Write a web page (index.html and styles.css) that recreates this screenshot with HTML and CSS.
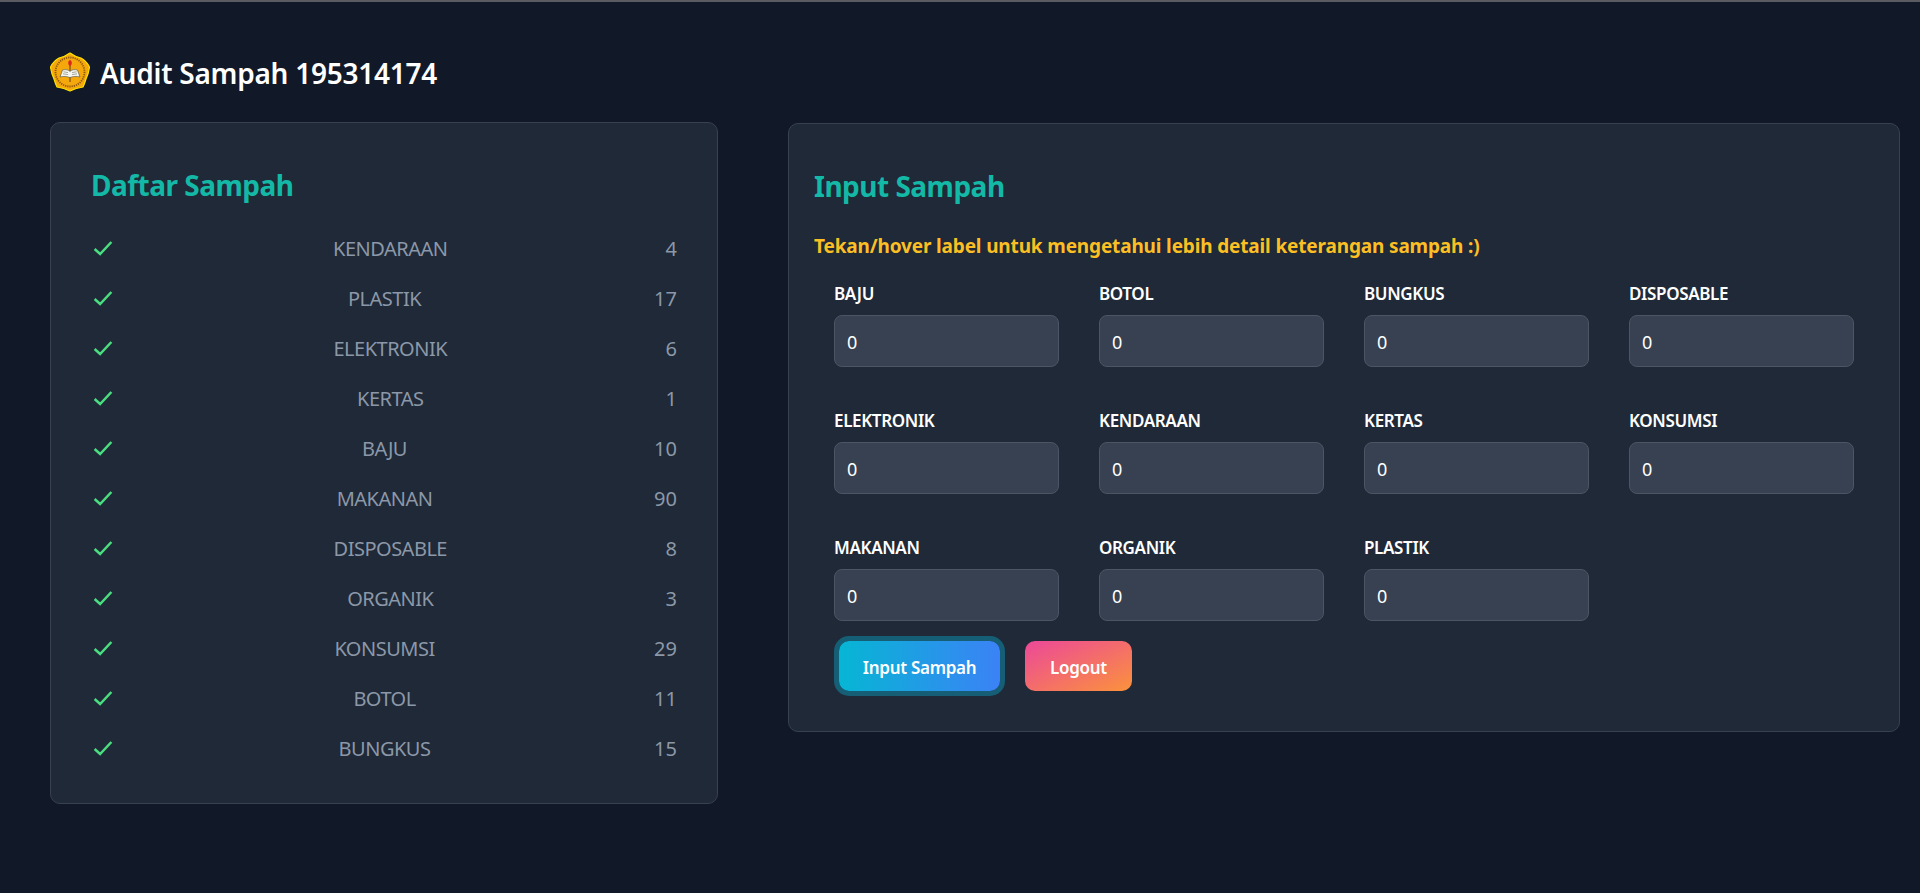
FILE: index.html
```html
<!DOCTYPE html>
<html lang="id">
<head>
<meta charset="utf-8">
<title>Audit Sampah 195314174</title>
<link rel="stylesheet" href="styles.css">
</head>
<body>
<div class="page">
  <header class="brand">
    <svg class="logo" viewBox="0 0 40 40" aria-hidden="true">
      <path d="M20 1 Q25.5 5 31 6 Q36.5 9 39.5 15 Q38.5 22 36 27 Q34.5 32 33 35 Q26 36 20 39 Q14 36 7 35 Q5.5 32 4 27 Q1.5 22 .5 15 Q3.5 9 9 6 Q14.5 5 20 1Z" fill="#f5a80c" stroke="#ffe100" stroke-width="1.2" stroke-linejoin="round"/>
      <circle cx="20" cy="20" r="14.5" fill="none" stroke="#8a5510" stroke-width="1.8" stroke-dasharray="1.2 1"/>
      <path d="M20 8 C17.6 9.2 17.6 12.4 20 14.5 C22.4 12.4 22.4 9.2 20 8Z" fill="#d6281c"/>
      <rect x="19.3" y="14" width="1.4" height="16" fill="#8a5a10"/>
      <path d="M10 25 L12.5 18 C15.5 17.2 18 17.6 20 19.4 C22 17.6 24.5 17.2 27.5 18 L30 25 C26.5 24 23 24.3 20 25.6 C17 24.3 13.5 24 10 25Z" fill="#f4f4f0" stroke="#4a4a3a" stroke-width=".6"/>
      <path d="M13.5 19.8 L18 20.6 M13 21.8 L18 22.6 M26.5 19.8 L22 20.6 M27 21.8 L22 22.6" stroke="#8a8a80" stroke-width=".7"/>
    </svg>
    <h1 class="brand-title">Audit Sampah 195314174</h1>
  </header>
  <main class="columns">
    <section class="card card-list">
      <h2 class="card-title">Daftar Sampah</h2>
      <ul class="list">
        <li class="row"><span class="tick"><svg viewBox="0 0 20 20"><path d="M3 10.8 L7.6 15 L17 5" /></svg></span><span class="name">KENDARAAN</span><span class="num">4</span></li>
        <li class="row"><span class="tick"><svg viewBox="0 0 20 20"><path d="M3 10.8 L7.6 15 L17 5" /></svg></span><span class="name">PLASTIK</span><span class="num">17</span></li>
        <li class="row"><span class="tick"><svg viewBox="0 0 20 20"><path d="M3 10.8 L7.6 15 L17 5" /></svg></span><span class="name">ELEKTRONIK</span><span class="num">6</span></li>
        <li class="row"><span class="tick"><svg viewBox="0 0 20 20"><path d="M3 10.8 L7.6 15 L17 5" /></svg></span><span class="name">KERTAS</span><span class="num">1</span></li>
        <li class="row"><span class="tick"><svg viewBox="0 0 20 20"><path d="M3 10.8 L7.6 15 L17 5" /></svg></span><span class="name">BAJU</span><span class="num">10</span></li>
        <li class="row"><span class="tick"><svg viewBox="0 0 20 20"><path d="M3 10.8 L7.6 15 L17 5" /></svg></span><span class="name">MAKANAN</span><span class="num">90</span></li>
        <li class="row"><span class="tick"><svg viewBox="0 0 20 20"><path d="M3 10.8 L7.6 15 L17 5" /></svg></span><span class="name">DISPOSABLE</span><span class="num">8</span></li>
        <li class="row"><span class="tick"><svg viewBox="0 0 20 20"><path d="M3 10.8 L7.6 15 L17 5" /></svg></span><span class="name">ORGANIK</span><span class="num">3</span></li>
        <li class="row"><span class="tick"><svg viewBox="0 0 20 20"><path d="M3 10.8 L7.6 15 L17 5" /></svg></span><span class="name">KONSUMSI</span><span class="num">29</span></li>
        <li class="row"><span class="tick"><svg viewBox="0 0 20 20"><path d="M3 10.8 L7.6 15 L17 5" /></svg></span><span class="name">BOTOL</span><span class="num">11</span></li>
        <li class="row"><span class="tick"><svg viewBox="0 0 20 20"><path d="M3 10.8 L7.6 15 L17 5" /></svg></span><span class="name">BUNGKUS</span><span class="num">15</span></li>
      </ul>
    </section>
    <section class="card card-form">
      <h2 class="card-title">Input Sampah</h2>
      <p class="note">Tekan/hover label untuk mengetahui lebih detail keterangan sampah :)</p>
      <form class="fields">
        <div class="field"><label class="field-label">BAJU</label><input class="field-input" value="0"></div>
        <div class="field"><label class="field-label">BOTOL</label><input class="field-input" value="0"></div>
        <div class="field"><label class="field-label">BUNGKUS</label><input class="field-input" value="0"></div>
        <div class="field"><label class="field-label">DISPOSABLE</label><input class="field-input" value="0"></div>
        <div class="field"><label class="field-label">ELEKTRONIK</label><input class="field-input" value="0"></div>
        <div class="field"><label class="field-label">KENDARAAN</label><input class="field-input" value="0"></div>
        <div class="field"><label class="field-label">KERTAS</label><input class="field-input" value="0"></div>
        <div class="field"><label class="field-label">KONSUMSI</label><input class="field-input" value="0"></div>
        <div class="field"><label class="field-label">MAKANAN</label><input class="field-input" value="0"></div>
        <div class="field"><label class="field-label">ORGANIK</label><input class="field-input" value="0"></div>
        <div class="field"><label class="field-label">PLASTIK</label><input class="field-input" value="0"></div>
      </form>
      <div class="actions">
        <button class="btn btn-primary" type="button">Input Sampah</button>
        <button class="btn btn-logout" type="button">Logout</button>
      </div>
    </section>
  </main>
</div>
</body>
</html>
```
FILE: styles.css
```css
* { box-sizing: border-box; }
html, body { margin: 0; height: 100%; }
body {
  background: #111827;
  color: #fff;
  font-family: "Noto Sans", "Open Sans", sans-serif;
  overflow: hidden;
}
.page {
  border-top: 2px solid #5a5c61;
  padding: 50px 20px 0 50px;
  height: 100%;
}
.brand {
  display: flex;
  align-items: center;
  gap: 10px;
  height: 40px;
  margin-bottom: 30px;
}
.logo { width: 40px; height: 40px; flex: none; }
.brand-title {
  margin: 0;
  padding-top: 2px;
  font-size: 28px;
  font-weight: 600;
  line-height: 40px;
  letter-spacing: -0.25px;
}
.columns {
  display: grid;
  grid-template-columns: 668px 1112px;
  column-gap: 70px;
  align-items: start;
}
.card {
  background: #1f2937;
  border: 1px solid #374151;
  border-radius: 10px;
}
.card-list { padding: 40px 40px 30px; }
.card-form { padding: 40px 25px 40px; margin-top: 1px; }
.card-title {
  margin: 0 0 15px;
  font-size: 28px;
  line-height: 45px;
  font-weight: 700;
  color: #14b8a6;
  letter-spacing: -0.5px;
}
.card-form .card-title { margin-bottom: 24px; }
.list { list-style: none; margin: 0; padding: 0; }
.row {
  display: flex;
  align-items: center;
  height: 50px;
  font-size: 20px;
  color: #8c98a8;
}
.tick { width: 24px; flex: none; display: flex; }
.tick svg {
  width: 24px; height: 24px;
  fill: none;
  stroke: #4ade80;
  stroke-width: 2.1;
}
.name { flex: 1; text-align: center; letter-spacing: -0.5px; }
.note {
  margin: 0 0 22px;
  font-size: 19px;
  line-height: 27px;
  font-weight: 700;
  color: #fbbf24;
  letter-spacing: -0.15px;
}
.fields {
  display: grid;
  grid-template-columns: repeat(4, 265px);
  row-gap: 42px;
  margin-bottom: 20px;
}
.field { padding: 0 20px; }
.field-label {
  display: block;
  margin-bottom: 9px;
  font-size: 17px;
  line-height: 24px;
  font-weight: 600;
  color: #fff;
  letter-spacing: -0.35px;
}
.field-input {
  display: block;
  width: 225px;
  height: 52px;
  padding: 2px 12px 0;
  background: #374151;
  border: 1px solid #4b5563;
  border-radius: 8px;
  color: #fff;
  font: inherit;
  font-size: 18px;
}
.actions {
  display: flex;
  gap: 25px;
  padding-left: 25px;
}
.btn {
  height: 50px;
  border: 0;
  border-radius: 10px;
  padding: 2px 0 0;
  color: #fff;
  font-family: inherit;
  font-size: 17px;
  font-weight: 600;
  letter-spacing: -0.3px;
  white-space: nowrap;
}
.btn-primary {
  width: 161px;
  background: linear-gradient(to right, #06b6d4, #3b82f6);
  box-shadow: 0 0 0 5px #155e75;
}
.btn-logout {
  width: 107px;
  background: linear-gradient(to bottom right, #ec4899, #fb923c);
}
```
